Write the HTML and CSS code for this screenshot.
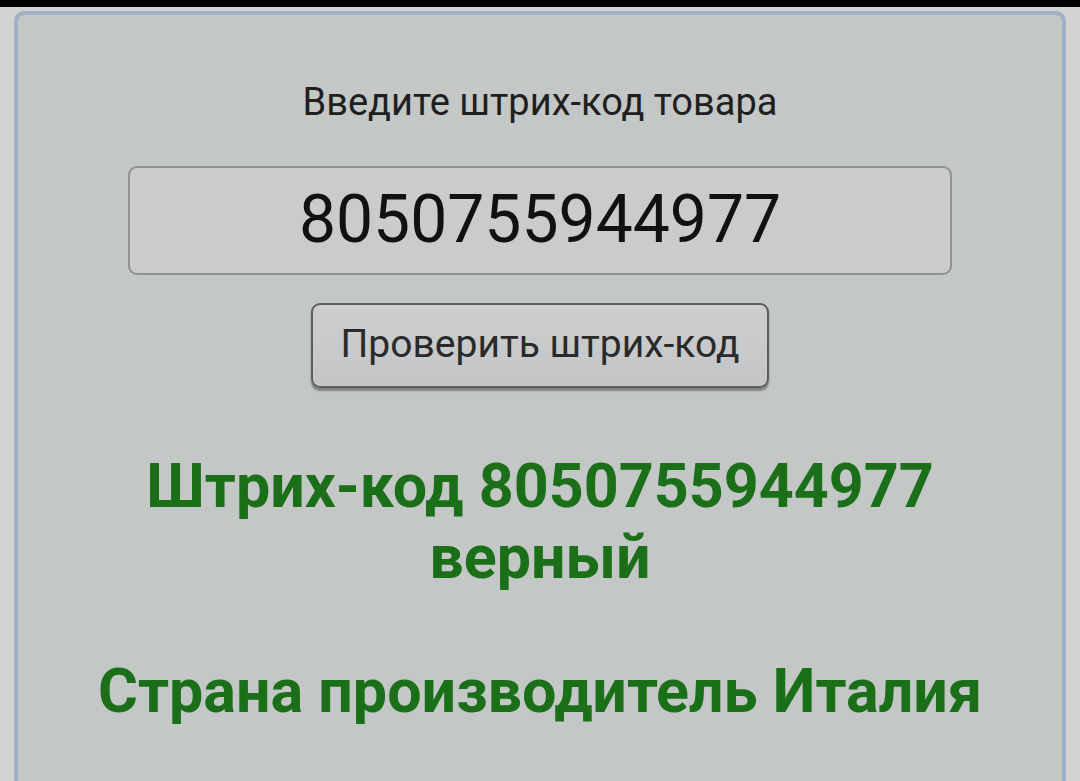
FILE: index.html
```html
<!DOCTYPE html>
<html lang="ru">
<head>
<meta charset="utf-8">
<link rel="stylesheet" href="styles.css">
<title>Проверка штрих-кода</title>
</head>
<body>
<div class="topbar"></div>
<div class="page">
  <div class="panel">
    <div class="label">Введите штрих-код товара</div>
    <div class="input">8050755944977</div>
    <div class="btn">Проверить штрих-код</div>
    <div class="result">Штрих-код 8050755944977<br>верный</div>
    <div class="country">Страна производитель Италия</div>
  </div>
</div>
</body>
</html>
```

FILE: styles.css
```css
html, body {
  margin: 0;
  padding: 0;
  height: 781px;
  overflow: hidden;
  background: #d2d3d3;
  font-family: Roboto, "Noto Sans", "DejaVu Sans", sans-serif;
}
.topbar {
  height: 7px;
  background: #000;
}
.page {
  padding: 4px 14px 0 14px;
}
.panel {
  box-sizing: border-box;
  height: 800px;
  background: #c3c7c6;
  border: 4px solid #9fb2c8;
  border-bottom: none;
  border-radius: 10px 10px 0 0;
  display: flex;
  flex-direction: column;
  align-items: center;
  padding-top: 63px;
}
.label {
  font-size: 38px;
  color: #1f1f1f;
  line-height: 48px;
}
.input {
  box-sizing: border-box;
  margin-top: 40px;
  width: 824px;
  height: 109px;
  background: #cbcbcd;
  border: 2px solid #8e9292;
  border-radius: 9px;
  font-size: 66px;
  color: #111;
  display: flex;
  align-items: center;
  justify-content: center;
  padding-bottom: 2px;
}
.btn {
  box-sizing: border-box;
  margin-top: 28px;
  width: 458px;
  height: 85px;
  background: linear-gradient(#cdcecf, #c4c5c7);
  border: 2px solid #5b5d5e;
  border-radius: 9px;
  box-shadow: 0 3px 2px rgba(0,0,0,0.35);
  font-size: 39px;
  color: #2a2a2a;
  display: flex;
  align-items: center;
  justify-content: center;
  padding-bottom: 4px;
}
.result {
  margin-top: 63px;
  font-size: 61px;
  font-weight: 700;
  color: #1a6f18;
  text-align: center;
  line-height: 71px;
}
.country {
  margin-top: 63px;
  font-size: 61px;
  font-weight: 700;
  color: #1a6f18;
  line-height: 71px;
}
```
